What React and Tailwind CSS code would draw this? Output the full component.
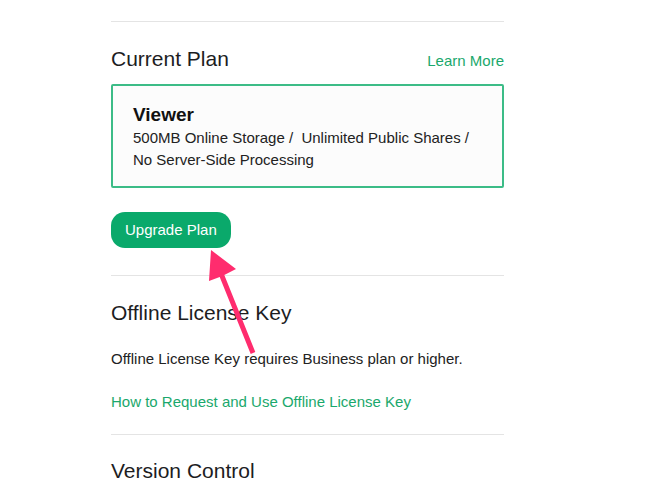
import React from "react";

function Divider({ className = "" }) {
  return <div className={`h-px bg-[#e4e4e4] ${className}`} />;
}

function App() {
  return (
    <div className="relative w-[662px] h-[500px] overflow-hidden bg-white font-['Liberation_Sans',Arial,sans-serif] text-[#1d1d1f]">
      <div className="ml-[111px] w-[393px] pt-[21px]">
        <Divider />

        <div className="mt-[25px] flex items-baseline justify-between h-[24px]">
          <h2 className="text-[21px] leading-[24px]">Current Plan</h2>
          <a className="text-[15px] leading-[24px] text-[#1aa86c]">Learn More</a>
        </div>

        <div className="mt-[13px] h-[104px] border-2 border-solid border-[#3cbc87] rounded-[2px] bg-[#fcfcfc] pl-[20px] pt-[17px]">
          <div className="text-[19px] leading-[24px] font-bold text-[#111]">Viewer</div>
          <p className="text-[15px] leading-[22px] text-[#222] whitespace-pre">
            {"500MB Online Storage /  Unlimited Public Shares /\nNo Server-Side Processing"}
          </p>
        </div>

        <button className="mt-[24px] h-[36px] px-[14px] rounded-[14px] bg-[#0aa96b] text-white text-[15px] leading-[36px]">
          Upgrade Plan
        </button>

        <Divider className="mt-[27px]" />

        <h2 className="mt-[25px] text-[21px] leading-[24px]">Offline License Key</h2>
        <p className="mt-[24px] text-[15px] leading-[20px] text-[#222]">
          Offline License Key requires Business plan or higher.
        </p>
        <a className="block mt-[23px] text-[15px] leading-[20px] text-[#1aa86c]">
          How to Request and Use Offline License Key
        </a>

        <Divider className="mt-[22px]" />

        <h2 className="mt-[24px] text-[21px] leading-[24px]">Version Control</h2>
      </div>

      <svg
        className="absolute top-0 left-0 pointer-events-none"
        width="662"
        height="500"
        viewBox="0 0 662 500"
      >
        <polygon
          fill="#ff2c6e"
          points="211,250 236,269 224.3,275 255.3,352 250.7,354 219.7,277 209,281"
        />
      </svg>
    </div>
  );
}

export default App;
